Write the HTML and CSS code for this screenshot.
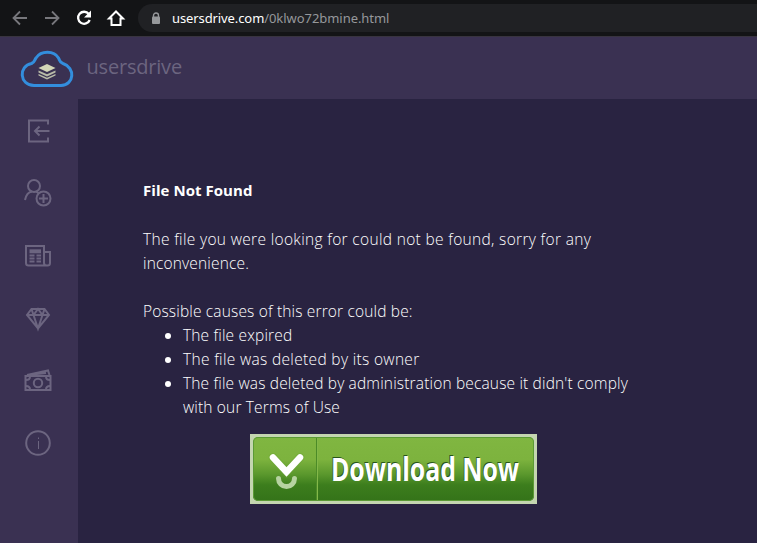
FILE: index.html
```html
<!DOCTYPE html>
<html lang="en">
<head>
    <meta charset="UTF-8">
    <meta name="viewport" content="width=device-width, initial-scale=1.0">
    <title>usersdrive</title>
    <link rel="stylesheet" href="styles.css">
</head>
<body>
    <div class="browser-bar">
        <svg class="nav-icons" width="138" height="36" viewBox="0 0 138 36" fill="none">
            <path d="M27 18H14M20 11.5L13.5 18L20 24.5" stroke="#77777c" stroke-width="1.8"/>
            <path d="M45 18H58M52 11.5L58.500 18L52 24.5" stroke="#77777c" stroke-width="1.8"/>
            <path d="M88.800 14A6 6 0 1 0 89.700 20" stroke="#fff" stroke-width="2.300"/>
            <path d="M91 10.500V17.500H84Z" fill="#fff"/>
            <path d="M111.500 25V18.500H109L116 11.500L123 18.500H120.500V25Z" stroke="#fff" stroke-width="2"/>
        </svg>
        <div class="address">
            <svg width="10" height="13" viewBox="0 0 10 13">
                <path d="M2.500 5V3.500a2.500 2.500 0 0 1 5 0V5" fill="none" stroke="#96989b" stroke-width="1.400"/>
                <rect x="1" y="4.500" width="8" height="7.500" rx="1" fill="#96989b"/>
            </svg>
            <span class="host">usersdrive.com</span><span class="path">/0klwo72bmine.html</span>
        </div>
    </div>
    <header class="header">
        <svg class="logo" width="54" height="38" viewBox="0 0 54 38">
            <path d="M14 35.500C-1 35-1.500 16 11.500 13.500C15 12 14 10.500 16 8C21 .3 34 .3 38.500 8C40 10.500 39 12 43 13.500C55.500 17.500 54.500 35 41 35.500Z" fill="none" stroke="#338edd" stroke-width="3"/>
            <path d="M18.500 18L27 14L35.500 18L27 22Z" fill="#d3d6b7"/>
            <path d="M18.500 20.500L27 24.200L35.500 20.500V22.500L27 26.500L18.500 22.500ZM18.500 24L27 27.700L35.500 24V25.500L27 29.500L18.500 25.500Z" fill="#b8bba8"/>
        </svg>
        <span class="brand">usersdrive</span>
    </header>
    <div class="page">
        <nav class="sidebar">
            <svg width="32" height="32" viewBox="0 0 32 32">
                <path d="M26 9.500V5.500H7V26.500H26V22.500M27.500 16H13M17.500 11.500L13 16L17.500 20.500"/>
            </svg>
            <svg width="32" height="32" viewBox="0 0 32 32">
                <circle cx="12" cy="9" r="6"/>
                <path d="M3 23C4 18 7 15 10 14.500M14 14.500L17 16.500M21.500 17V26M17 21.500H26"/>
                <circle cx="21.500" cy="21.500" r="7"/>
            </svg>
            <svg width="32" height="32" viewBox="0 0 32 32">
                <path d="M22 23V6H4V23Q4 25.500 6.500 25.500H25.500Q28 25.500 28 23V12H22V23Q22 25.500 25 25.500"/>
                <path class="thick" d="M7.500 11.300H19"/>
                <path d="M7.500 15.500H12.500M14.500 15.500H19M7.500 18.500H12.500M14.500 18.500H19M7.500 21.500H12.500M14.500 21.500H19"/>
            </svg>
            <svg width="32" height="32" viewBox="0 0 32 32">
                <path d="M9.500 7H22.500L27 13L16 26.500L5 13ZM5 13H27M9.500 7L11.500 13L16 26.500L20.500 13L22.500 7M11.500 13L16 7L20.500 13"/>
            </svg>
            <svg width="32" height="32" viewBox="0 0 32 32">
                <path d="M3.500 11H28.500V25H3.500ZM5 10L26 5.500L27.500 10M10 9.500L24 8"/>
                <circle cx="16" cy="18" r="4.200"/>
                <path d="M4 15Q8 15 8 11.500M28 15Q24 15 24 11.500M4 21Q8 21 8 24.500M28 21Q24 21 24 24.500"/>
            </svg>
            <svg width="32" height="32" viewBox="0 0 32 32">
                <circle cx="16" cy="16" r="11.800"/>
                <path class="thin" d="M16.500 14V22M16.500 10.500V12"/>
            </svg>
        </nav>
        <main class="content">
            <h1>File Not Found</h1>
            <p><span class="wide">The file you were looking for could not be found, sorry for any</span><br>inconvenience.</p>
            <p class="causes">Possible causes of this error could be:</p>
            <ul>
                <li>The file expired</li>
                <li><span class="wide">The file was deleted by its owner</span></li>
                <li>The file was deleted by administration because it didn't comply<br>with our Terms of Use</li>
            </ul>
            <div class="download">
                <a class="download-button">
                    <svg width="65" height="64" viewBox="0 0 65 64">
                        <path d="M63.500 1V63" stroke="#4c8b27"/>
                        <path d="M64.500 1V63" stroke="#84b849"/>
                        <path d="M25.500 41.500A8 8 0 0 0 41.500 41.500" fill="none" stroke="#b6d3a1" stroke-width="5" stroke-linecap="round"/>
                        <path d="M20 20.500L33.500 35L47 20.500" fill="none" stroke="#6ba638" stroke-width="9" stroke-linecap="round" opacity="0.4"/>
                        <path d="M20 20.500L33.500 35L47 20.500" fill="none" stroke="#fff" stroke-width="6.500" stroke-linecap="round"/>
                    </svg>
                    <span class="label">Download Now</span>
                </a>
            </div>
        </main>
    </div>
</body>
</html>
```
FILE: styles.css
```css
* {
    box-sizing: border-box;
}
body {
    margin: 0;
    height: 543px;
    overflow: hidden;
    display: flex;
    flex-direction: column;
    background-color: #292341;
    color: #fff;
    font-family: "Open Sans", sans-serif;
}
.browser-bar {
    display: flex;
    flex: none;
    height: 37px;
    background-color: #131416;
    border-bottom: 1px solid #38343f;
}
.address {
    flex: 1;
    display: flex;
    align-items: center;
    height: 28px;
    margin-top: 4px;
    padding-left: 13px;
    border-radius: 14px 0 0 14px;
    background-color: #202124;
    font-family: "Noto Sans", sans-serif;
    font-size: 13px;
    white-space: nowrap;
}
.host {
    margin-left: 11px;
    letter-spacing: -0.1px;
}
.path {
    color: #96989b;
    letter-spacing: -0.05px;
}
.header {
    display: flex;
    flex: none;
    height: 62px;
    padding: 13px 0 0 20px;
    background-color: #3a3152;
}
.brand {
    margin-left: 12.5px;
    line-height: 34px;
    font-size: 20px;
    letter-spacing: -0.2px;
    color: #6c6580;
}
.page {
    display: flex;
    flex: 1;
}
.sidebar {
    width: 78px;
    padding: 15.5px 0 0 22px;
    display: flex;
    flex-direction: column;
    gap: 30.6px;
    background-color: #3a3152;
}
.sidebar svg {
    flex: none;
    fill: none;
    stroke: #6c6580;
    stroke-width: 2;
}
.sidebar .thick {
    stroke-width: 4;
}
.sidebar .thin {
    stroke-width: 1;
}
.content {
    flex: 1;
    padding: 79px 0 0 65px;
    font-size: 15.5px;
    font-weight: 300;
    line-height: 24px;
    letter-spacing: 0.16px;
    white-space: nowrap;
}
.wide {
    letter-spacing: 0.33px;
}
h1 {
    margin: 0 0 25px;
    font-size: 15px;
    font-weight: 700;
    line-height: 24px;
    letter-spacing: 0.05px;
}
p {
    margin: 0 0 24px;
}
.causes {
    margin: 0;
}
ul {
    margin: 0;
    padding-left: 40px;
}
.download {
    width: 287px;
    height: 70px;
    margin: 15px 0 0 107px;
    padding: 3px;
    background-color: #c4d6b0;
}
.download-button {
    display: flex;
    height: 64px;
    border-radius: 5px;
    background: linear-gradient(#80b641 0%, #7db33e 35%, #5b982d 58%, #3c7d1d 75%, #347319 100%);
    box-shadow: inset 0 0 0 1px #5b9a35;
    letter-spacing: 0;
}
.download-button svg {
    flex: none;
}
.label {
    flex: none;
    margin-left: 13px;
    font-size: 32px;
    font-weight: 700;
    line-height: 64px;
    text-shadow: -1px -1px 0 #28551a;
    transform: scaleX(0.775);
    transform-origin: left;
}
```
